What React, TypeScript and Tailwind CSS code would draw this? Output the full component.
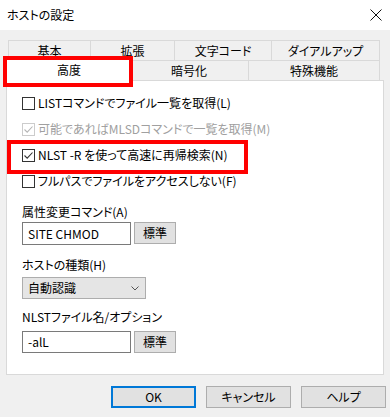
import React from 'react';

const font = "font-['Noto_Sans_CJK_JP','Noto_Sans',sans-serif] [font-feature-settings:'palt']";

const Check: React.FC<{ checked?: boolean; disabled?: boolean }> = ({ checked, disabled }) => (
  <div
    className={`w-[13px] h-[13px] border flex items-center justify-center bg-white ${
      disabled ? 'border-[#cccccc]' : 'border-[#333333]'
    }`}
  >
    {checked && (
      <svg width="11" height="11" viewBox="0 0 11 11">
        <path d="M1.5 5.5 L4.2 8.2 L9.5 2.5" fill="none" stroke={disabled ? '#b5b5b5' : '#333'} strokeWidth="1.1" />
      </svg>
    )}
  </div>
);

const Row: React.FC<{ label: string; checked?: boolean; disabled?: boolean }> = ({ label, checked, disabled }) => (
  <div className="h-[26px] flex items-center gap-[3px]">
    <Check checked={checked} disabled={disabled} />
    <span className={`text-[12px] leading-none ${disabled ? 'text-[#a0a0a0]' : 'text-black'}`}>{label}</span>
  </div>
);

const SmallButton: React.FC<{ label: string }> = ({ label }) => (
  <div className="w-[42px] h-[22px] bg-[#e1e1e1] border border-[#adadad] flex items-center justify-center text-[12px]">
    {label}
  </div>
);

const App: React.FC = () => {
  const row1 = [
    { t: '基本', w: 83 },
    { t: '拡張', w: 84 },
    { t: '文字コード', w: 97 },
    { t: 'ダイアルアップ', w: 108 },
  ];

  return (
    <div className={`relative w-[390px] h-[417px] bg-[#f0f0f0] text-black overflow-hidden ${font}`}>
      {/* Title bar */}
      <div className="h-[30px] bg-white flex items-center justify-between pl-[7px] pr-[8px]">
        <span className="text-[12px]">ホストの設定</span>
        <svg width="12" height="12" viewBox="0 0 12 12">
          <path d="M0.5 0.5 L11.5 11.5 M11.5 0.5 L0.5 11.5" stroke="#111" strokeWidth="1" />
        </svg>
      </div>

      <div className="pt-[10px] px-[6px]">
        {/* Tabs row 1 */}
        <div className="flex mx-[2px] h-[20px]">
          {row1.map((r, i) => (
            <div
              key={r.t}
              style={{ width: r.w }}
              className={`border-t border-r border-[#d9d9d9] flex items-center justify-center text-[12px] ${
                i === 0 ? 'border-l' : ''
              }`}
            >
              {r.t}
            </div>
          ))}
        </div>
        {/* Tabs row 2 */}
        <div className="flex mx-[2px] h-[20px] relative">
          <div className="w-[122px] flex items-center justify-center text-[12px] relative">
            <div className="absolute -left-[2px] -right-[2px] -top-[2px] -bottom-[1px] bg-white border-t border-l border-r border-[#d9d9d9] flex items-center justify-center z-10">
              高度
            </div>
          </div>
          <div className="w-[119px] border-t border-r border-[#d9d9d9] flex items-center justify-center text-[12px]">
            暗号化
          </div>
          <div className="w-[131px] border-t border-r border-[#d9d9d9] flex items-center justify-center text-[12px]">
            特殊機能
          </div>
        </div>

        {/* Panel */}
        <div className="h-[295px] bg-white border border-[#d9d9d9] pl-[15px] pt-[9px]">
          <Row label="LISTコマンドでファイル一覧を取得(L)" />
          <Row label="可能であればMLSDコマンドで一覧を取得(M)" checked disabled />
          <Row label="NLST -R を使って高速に再帰検索(N)" checked />
          <Row label="フルパスでファイルをアクセスしない(F)" />

          <div className="mt-[10px] h-[16px] flex items-center text-[12px]">属性変更コマンド(A)</div>
          <div className="mt-[2px] flex gap-[3px]">
            <div className="w-[109px] h-[23px] border border-[#7a7a7a] bg-white flex items-center pl-[5px] text-[12px]">
              SITE CHMOD
            </div>
            <SmallButton label="標準" />
          </div>

          <div className="mt-[12px] h-[16px] flex items-center text-[12px]">ホストの種類(H)</div>
          <div className="mt-[4px] w-[124px] h-[22px] bg-[#e5e5e5] border border-[#adadad] flex items-center justify-between pl-[5px] pr-[6px] text-[12px]">
            <span>自動認識</span>
            <svg width="8" height="5" viewBox="0 0 8 5">
              <path d="M0.5 0.5 L4 4 L7.5 0.5" fill="none" stroke="#555" strokeWidth="1" />
            </svg>
          </div>

          <div className="mt-[10px] h-[16px] flex items-center text-[12px]">NLSTファイル名/オプション</div>
          <div className="mt-[6px] flex gap-[3px]">
            <div className="w-[109px] h-[22px] border border-[#7a7a7a] bg-white flex items-center pl-[5px] text-[12px]">
              -alL
            </div>
            <SmallButton label="標準" />
          </div>
        </div>

        {/* Buttons */}
        <div className="mt-[11px] flex justify-end gap-[10px] pr-[-2px]">
          <div className="w-[85px] h-[22px] bg-[#e1e1e1] border-2 border-[#0078d7] flex items-center justify-center text-[12px]">
            OK
          </div>
          <div className="w-[85px] h-[22px] bg-[#e1e1e1] border border-[#adadad] flex items-center justify-center text-[12px]">
            キャンセル
          </div>
          <div className="w-[85px] h-[22px] bg-[#e1e1e1] border border-[#adadad] flex items-center justify-center text-[12px] mr-[-2px]">
            ヘルプ
          </div>
        </div>
      </div>

      {/* Red annotation boxes */}
      <div className="absolute left-[3px] top-[56px] w-[130px] h-[31px] border-4 border-[#ff0000] z-20 pointer-events-none" />
      <div className="absolute left-[7px] top-[140px] w-[241px] h-[34px] border-4 border-[#ff0000] z-20 pointer-events-none" />
    </div>
  );
};

export default App;
